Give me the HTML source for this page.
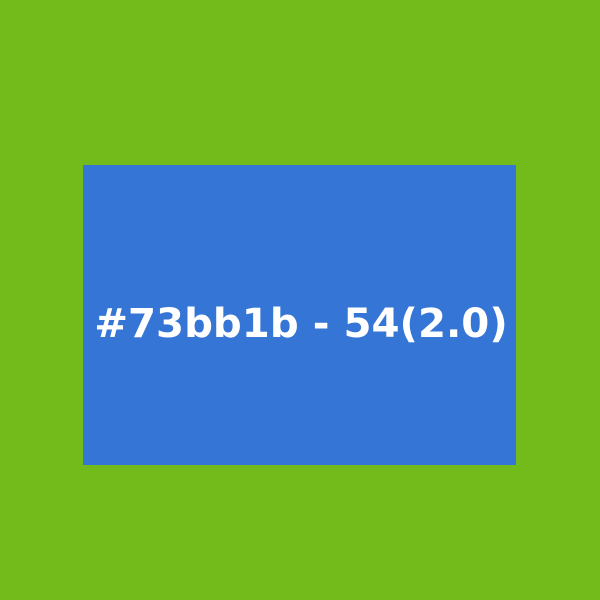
<!DOCTYPE html>
<html><head><style>
html,body{margin:0;padding:0;}
body{width:600px;height:600px;background:#73bb1b;position:relative;overflow:hidden;}
.r{position:absolute;left:83px;top:165px;width:433px;height:300px;background:#3575d6;}
.t{position:absolute;left:1px;width:600px;top:299px;text-align:center;color:#fff;font:bold 40.3px "DejaVu Sans",sans-serif;line-height:50px;}
</style></head><body>
<div class="r"></div>
<div class="t">#73bb1b - 54(2.0)</div>
</body></html>
